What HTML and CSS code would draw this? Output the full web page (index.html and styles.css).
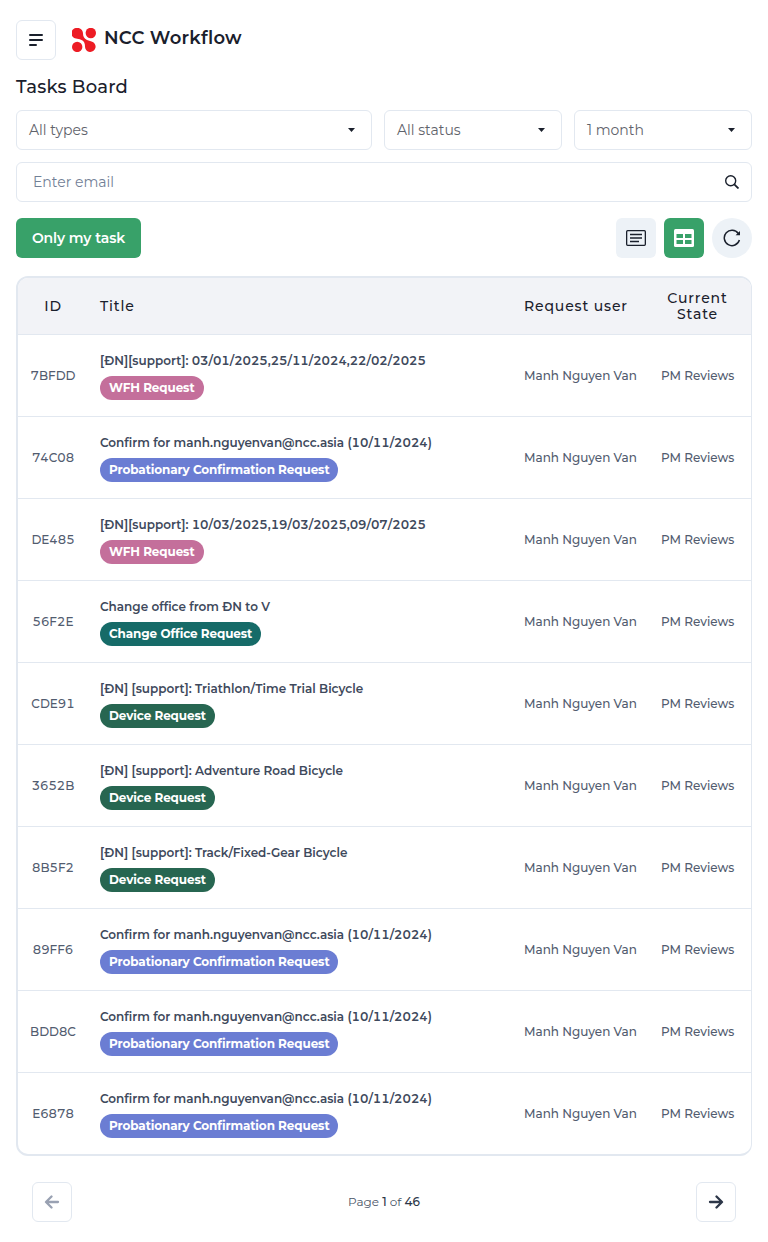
FILE: index.html
```html
<!DOCTYPE html>
<html lang="en">
<head>
<meta charset="utf-8">
<title>NCC Workflow</title>
<link rel="stylesheet" href="styles.css">
</head>
<body>
<header class="topbar">
  <button class="icon-box" aria-label="Menu"><svg width="16" height="14" viewBox="0 0 16 14" fill="none" stroke="#1a202c" stroke-width="2" stroke-linecap="round"><path d="M2 2h12M2 7h12M2 12h6"/></svg></button>
  <svg class="logo" width="24" height="24" viewBox="0 0 24 24" fill="#ed1c24"><circle cx="18.800" cy="5" r="5.200"/><circle cx="5.200" cy="18.900" r="5.200"/><path d="M5.500 0C9 0 11 2.500 11 5.500c0 3 1 5 4 6.500 1.500.8 3 1 4.500 1.500A5.300 5.300 0 1 1 13 18.500C13 15 12 13 9 11.700 7.500 11 5.500 11 4 10.500A5.300 5.300 0 0 1 5.500 0Z"/></svg>
  <span class="brand">NCC Workflow</span>
</header>
<main class="page">
  <h1 class="heading">Tasks Board</h1>
  <div class="filters">
    <div class="field"><span>All types</span><i class="caret"></i></div>
    <div class="field"><span>All status</span><i class="caret"></i></div>
    <div class="field"><span>1 month</span><i class="caret"></i></div>
  </div>
  <div class="field search"><span>Enter email</span><svg width="14" height="14" viewBox="0 0 14 14" fill="none" stroke="#1a202c" stroke-width="1.400"><circle cx="5.700" cy="5.700" r="5"/><path d="M9.300 9.300 13.500 13.500" stroke-width="1.800"/></svg></div>
  <div class="toolbar">
    <button class="mine">Only my task</button>
    <div class="views">
      <button class="view" aria-label="List"><svg width="20" height="16" viewBox="0 0 20 16" fill="none" stroke="#1a202c" stroke-width="1.300"><rect x=".65" y=".65" width="18.700" height="14.700" rx="1"/><path d="M4 4.500h12M4 8h12M4 11.500h9"/></svg></button>
      <button class="view active" aria-label="Table"><svg width="20" height="18" viewBox="0 0 20 18"><rect width="20" height="18" rx="1.500" fill="#fff"/><path d="M2.500 5h6.500v4h-6.500zM11 5h6.500v4h-6.500zM2.500 11h6.500v4h-6.500zM11 11h6.500v4h-6.500z" fill="#38a169"/></svg></button>
      <button class="view round" aria-label="Refresh"><svg width="18" height="18" viewBox="0 0 18 18" fill="none" stroke="#1a202c" stroke-width="1.500"><path d="M15.300 4.500A7.700 7.700 0 1 0 16.400 11"/><path d="M17 2V6.200H12.600Z" fill="#1a202c" stroke="none"/></svg></button>
    </div>
  </div>
  <section class="table">
    <div class="row head"><span class="center">ID</span><span>Title</span><span>Request user</span><span class="center">Current<br>State</span></div>
    <div class="row"><span class="center">7BFDD</span><div><p class="title">[ĐN][support]: 03/01/2025,25/11/2024,22/02/2025</p><span class="tag wfh">WFH Request</span></div><span class="user">Manh Nguyen Van</span><span class="center">PM Reviews</span></div>
    <div class="row"><span class="center">74C08</span><div><p class="title">Confirm for manh.nguyenvan@ncc.asia (10/11/2024)</p><span class="tag prob">Probationary Confirmation Request</span></div><span class="user">Manh Nguyen Van</span><span class="center">PM Reviews</span></div>
    <div class="row"><span class="center">DE485</span><div><p class="title">[ĐN][support]: 10/03/2025,19/03/2025,09/07/2025</p><span class="tag wfh">WFH Request</span></div><span class="user">Manh Nguyen Van</span><span class="center">PM Reviews</span></div>
    <div class="row"><span class="center">56F2E</span><div><p class="title">Change office from ĐN to V</p><span class="tag office">Change Office Request</span></div><span class="user">Manh Nguyen Van</span><span class="center">PM Reviews</span></div>
    <div class="row"><span class="center">CDE91</span><div><p class="title">[ĐN] [support]: Triathlon/Time Trial Bicycle</p><span class="tag device">Device Request</span></div><span class="user">Manh Nguyen Van</span><span class="center">PM Reviews</span></div>
    <div class="row"><span class="center">3652B</span><div><p class="title">[ĐN] [support]: Adventure Road Bicycle</p><span class="tag device">Device Request</span></div><span class="user">Manh Nguyen Van</span><span class="center">PM Reviews</span></div>
    <div class="row"><span class="center">8B5F2</span><div><p class="title">[ĐN] [support]: Track/Fixed-Gear Bicycle</p><span class="tag device">Device Request</span></div><span class="user">Manh Nguyen Van</span><span class="center">PM Reviews</span></div>
    <div class="row"><span class="center">89FF6</span><div><p class="title">Confirm for manh.nguyenvan@ncc.asia (10/11/2024)</p><span class="tag prob">Probationary Confirmation Request</span></div><span class="user">Manh Nguyen Van</span><span class="center">PM Reviews</span></div>
    <div class="row"><span class="center">BDD8C</span><div><p class="title">Confirm for manh.nguyenvan@ncc.asia (10/11/2024)</p><span class="tag prob">Probationary Confirmation Request</span></div><span class="user">Manh Nguyen Van</span><span class="center">PM Reviews</span></div>
    <div class="row"><span class="center">E6878</span><div><p class="title">Confirm for manh.nguyenvan@ncc.asia (10/11/2024)</p><span class="tag prob">Probationary Confirmation Request</span></div><span class="user">Manh Nguyen Van</span><span class="center">PM Reviews</span></div>
  </section>
  <nav class="pager">
    <button class="icon-box" aria-label="Previous"><svg width="16" height="14" viewBox="0 0 16 14" fill="none" stroke="#99a1b2" stroke-width="2.300" stroke-linecap="round" stroke-linejoin="round"><path d="M14 7H2.500M7.500 1.500 2 7l5.500 5.500"/></svg></button>
    <span class="pages">Page <b>1</b> of <b>46</b></span>
    <button class="icon-box" aria-label="Next"><svg width="16" height="14" viewBox="0 0 16 14" fill="none" stroke="#2d3748" stroke-width="2.300" stroke-linecap="round" stroke-linejoin="round"><path d="M2 7h11.500M8.500 1.500 14 7l-5.500 5.500"/></svg></button>
  </nav>
</main>
</body>
</html>
```
FILE: styles.css
```css
* { box-sizing: border-box; }
body { margin: 0; padding: 20px 16px; background: #fff; color: #1a202c; font-family: Montserrat, Inter, sans-serif; font-size: 14px; }
button { font: inherit; padding: 0; border: 0; background: none; display: flex; align-items: center; justify-content: center; }
svg { display: block; flex: none; }
.topbar { display: flex; align-items: center; height: 40px; }
.icon-box { width: 40px; height: 40px; border: 1px solid #e2e8f0; border-radius: 6px; }
.logo { margin-left: 16px; }
.brand { margin-left: 8px; padding-bottom: 4px; font-size: 18px; font-weight: 600; line-height: 24px; letter-spacing: .27px; }
.heading { margin: 14px 0 10px; font-size: 18px; font-weight: 500; line-height: 26px; letter-spacing: .22px; }
.filters { display: grid; grid-template-columns: 356px 178px 178px; gap: 12px; }
.field { display: flex; align-items: center; justify-content: space-between; height: 40px; padding: 0 16px 0 12px; border: 1px solid #e2e8f0; border-radius: 6px; color: #5f636b; font-weight: 400; }
.caret { width: 7px; height: 4px; background: #1a202c; clip-path: polygon(0 0, 100% 0, 50% 100%); }
.search { margin-top: 12px; padding: 0 12px 0 16px; color: #718096; font-weight: 400; }
.toolbar { display: flex; justify-content: space-between; margin-top: 16px; }
.mine { width: 125px; height: 40px; border-radius: 6px; background: #38a169; color: #fff; font-weight: 600; letter-spacing: -.08px; }
.views { display: flex; gap: 8px; }
.view { width: 40px; height: 40px; border-radius: 6px; background: #edf2f7; }
.active { background: #38a169; }
.round { border-radius: 50%; }
.table { margin-top: 18px; border: solid #e2e8f0; border-width: 2px 1px 2px 2px; border-radius: 12px; overflow: hidden; font-variant-numeric: lining-nums tabular-nums; }
.row { display: grid; grid-template-columns: 46px 400px 113px 73px; gap: 24px; align-items: center; height: 82px; padding-left: 12px; border-bottom: 1px solid #e2e8f0; color: #525c6f; font-size: 12px; font-weight: 500; }
.row:last-child { border-bottom: 0; height: 81px; }
.head { height: 57px; background: #f2f3f7; color: #1a202c; font-size: 14px; font-weight: 500; line-height: 16px; letter-spacing: .85px; }
.center { text-align: center; white-space: nowrap; }
.title { margin: 0 0 6px; color: #3e495c; font-weight: 600; line-height: 18px; white-space: nowrap; }
.tag { display: flex; align-items: center; width: 104px; height: 24px; padding-left: 9px; border-radius: 12px; color: #fff; font-weight: 700; letter-spacing: -.1px; white-space: nowrap; }
.wfh { background: #c46f9b; }
.prob { width: 238px; background: #6b7dd3; }
.office { width: 161px; background: #166b68; }
.device { width: 115px; background: #276651; }
.user { white-space: nowrap; }
.pager { display: flex; align-items: center; justify-content: space-between; margin-top: 26px; padding: 0 16px; color: #4a5568; font-size: 12px; }
.pages { padding-bottom: 1px; }
.pager b { font-weight: 500; color: #2d3748; }
```
